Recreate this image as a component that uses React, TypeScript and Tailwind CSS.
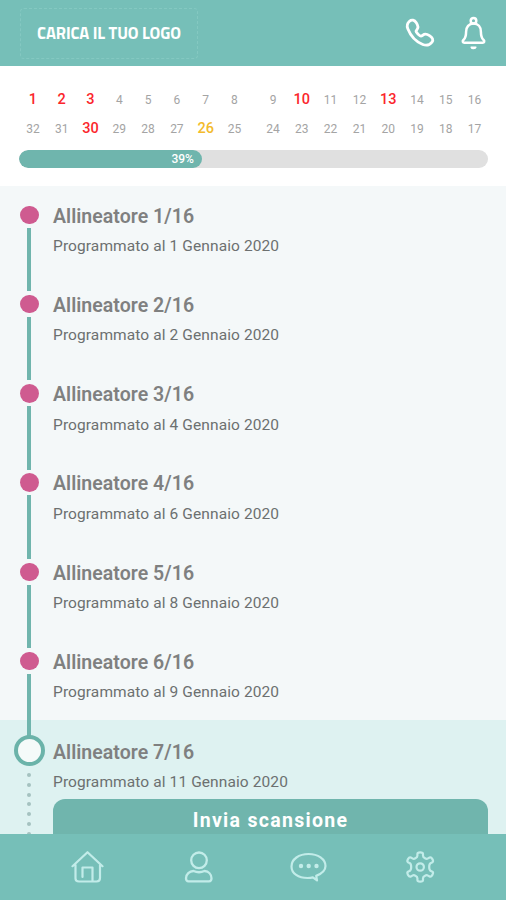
import React from "react";

type Day = { value: number; tone?: "missed" | "today" };

const firstRow: Day[] = [
  { value: 1, tone: "missed" }, { value: 2, tone: "missed" }, { value: 3, tone: "missed" }, { value: 4 },
  { value: 5 }, { value: 6 }, { value: 7 }, { value: 8 }, { value: 9 }, { value: 10, tone: "missed" },
  { value: 11 }, { value: 12 }, { value: 13, tone: "missed" }, { value: 14 }, { value: 15 }, { value: 16 },
];

const secondRow: Day[] = [
  { value: 32 }, { value: 31 }, { value: 30, tone: "missed" }, { value: 29 }, { value: 28 }, { value: 27 },
  { value: 26, tone: "today" }, { value: 25 }, { value: 24 }, { value: 23 }, { value: 22 }, { value: 21 },
  { value: 20 }, { value: 19 }, { value: 18 }, { value: 17 },
];

const aligners = [
  { n: 1, day: 1 }, { n: 2, day: 2 }, { n: 3, day: 4 }, { n: 4, day: 6 }, { n: 5, day: 8 }, { n: 6, day: 9 },
];

function DayCell({ day }: { day: Day }) {
  const tone =
    day.tone === "missed"
      ? "text-[14.5px] font-medium text-[#fb262c]"
      : day.tone === "today"
        ? "text-[14.5px] font-medium text-[#f3bb2c]"
        : "text-[12px] text-[#a4a4a4]";
  return <span className={`w-[28.8px] text-center leading-[20px] ${tone}`}>{day.value}</span>;
}

function DayRow({ days }: { days: Day[] }) {
  return (
    <div className="flex h-[29px] items-center justify-between pr-[17px] pl-[18.5px]">
      <div className="flex">{days.slice(0, 8).map((d) => <DayCell key={d.value} day={d} />)}</div>
      <div className="flex">{days.slice(8).map((d) => <DayCell key={d.value} day={d} />)}</div>
    </div>
  );
}

function AlignerText({ n, day }: { n: number; day: number }) {
  return (
    <div className="whitespace-nowrap">
      <h2 className="text-[19.5px] leading-[21px] font-semibold tracking-[0.04px] text-[#7f8080]">Allineatore {n}/16</h2>
      <p className="mt-[10.5px] text-[15.5px] leading-[18px] tracking-[0.1px] text-[#6c7070]">Programmato al {day} Gennaio 2020</p>
    </div>
  );
}

function Header() {
  return (
    <header className="flex h-[66px] shrink-0 items-start bg-[#76bfb8] text-white">
      <div className="mt-[8px] ml-[20px] flex h-[51px] w-[178px] items-center justify-center rounded-[4px] border border-dashed border-[#84c8c1]">
        <span className="font-['Titillium_Web','Open_Sans',sans-serif] text-[16.5px] font-bold tracking-[-0.1px] whitespace-nowrap">CARICA IL TUO LOGO</span>
      </div>
      <svg className="mt-[17px] ml-[205.500px] shrink-0" width="34" height="34" viewBox="0 0 34 34" fill="none" stroke="currentColor" strokeWidth="2.8" strokeLinejoin="round">
        <path d="M5.500 4.200c2.200-2 5-1.200 6.800 1.600 1.700 2.600 2.500 4.600.8 6.600-.9 1-1.500 1.600-.8 2.700 1 1.600 2.200 2.900 3.800 3.800 1.200.7 1.800 0 2.800-.8 2-1.600 4-1.100 6.600.6 3 1.900 4.200 4.300 2.500 6.400-2.300 2.900-5.600 3.800-9.200 2.400C11.600 24.700 6.500 18.600 3.800 11.800 2.700 9 3.200 6.200 5.500 4.200Z" />
      </svg>
      <svg className="mt-[16px] ml-[22px] shrink-0" width="30" height="36" viewBox="0 0 30 36" fill="none" stroke="currentColor" strokeWidth="2.5" strokeLinejoin="round">
        <circle cx="13.500" cy="4.700" r="2.800" />
        <path d="M13.500 7.500c-4.600 0-7.400 3.500-7.400 8.200 0 4.600-.5 6.300-2.700 8.300-1.200 1.200-.7 2.700 1 2.700h18.200c1.700 0 2.200-1.500 1-2.700-2.200-2-2.700-3.700-2.700-8.300 0-4.700-2.800-8.200-7.400-8.200Z" />
        <path d="M11.200 31.200h4.700c-.4 1.800-4.200 1.900-4.700 0Z" fill="currentColor" strokeWidth="1.500" />
      </svg>
    </header>
  );
}

function Footer() {
  return (
    <nav className="grid h-[66px] shrink-0 grid-cols-4 justify-items-center bg-[#76bfb8] px-[32px] pt-[16px] text-[#c2ece9]">
      <svg width="34" height="34" viewBox="0 0 34 34" fill="none" stroke="currentColor" strokeWidth="2.200" strokeLinecap="round" strokeLinejoin="round">
        <path d="M2.500 16.200 17.500 2.200l15 14M5.500 15v13.500Q5.500 31.500 9 31.500h17.500q3.500 0 3.500-3.500V15M12.500 27V17.500h10V31" />
      </svg>
      <svg width="34" height="34" viewBox="0 0 34 34" fill="none" stroke="currentColor" strokeWidth="2.300" strokeLinejoin="round">
        <circle cx="18" cy="10.300" r="7.800" />
        <path d="M12.500 21c3.500 1.600 7.500 1.600 11 0 4 .3 7 3.100 7 7.300 0 2-.8 3-2.500 3H7.500c-1.700 0-2.500-1-2.500-3 0-4.200 3.500-7 7.500-7.300Z" />
      </svg>
      <svg width="38" height="34" viewBox="0 0 38 34" fill="none" stroke="currentColor" strokeWidth="2.200" strokeLinejoin="round">
        <path d="M19.500 4C10 4 2.500 9.200 2.500 16.400S9.500 28 18.500 28c2.200 0 4-.2 5.400-.6l4.100 2.900-.8-4.400c5.700-2.200 9.300-5.300 9.300-9.800C36.500 8.900 29 4 19.500 4Z" />
        <g fill="currentColor" stroke="none"><circle cx="12" cy="16" r="2.200" /><circle cx="19.700" cy="16" r="2.200" /><circle cx="27.500" cy="16" r="2.200" /></g>
      </svg>
      <svg width="34" height="34" viewBox="0 0 34 34" fill="none" stroke="currentColor" strokeWidth="2.200" strokeLinejoin="round">
        <g transform="translate(1.200 -.5)">
          <circle cx="17" cy="17.500" r="3.700" />
          <path d="M14.200 4.500Q14.200 2.800 17 2.800t2.800 1.700v1.800q0 1.500 2 2.500 1.600.9 3 .1l1.600-.9q1.500-.7 2.800 1.600t0 3.100l-1.600.9Q26 14.400 26 17.500t1.600 3.900l1.600.9q1.300.8 0 3.100T26.400 27l-1.600-.9q-1.400-.8-3 .1-2 1-2 2.500v1.800q0 1.700-2.800 1.700t-2.800-1.700v-1.800q0-1.500-2-2.500-1.600-.9-3-.1L7.600 27q-1.500.7-2.800-1.600t0-3.100l1.600-.9Q8 20.600 8 17.500t-1.600-3.900l-1.600-.9Q3.500 11.900 4.800 9.600T7.600 8l1.600.9q1.400.8 3-.1 2-1 2-2.500Z" />
        </g>
      </svg>
    </nav>
  );
}

export default function App() {
  return (
    <div className="flex h-[900px] w-[506px] flex-col overflow-hidden bg-white font-['Roboto',sans-serif]">
      <Header />
      <section className="h-[120px] shrink-0 pt-[19px]">
        <DayRow days={firstRow} />
        <DayRow days={secondRow} />
        <div className="mt-[7px] mr-[18px] ml-[19px] h-[17.500px] overflow-hidden rounded-full bg-[#e0e0e0]">
          <div className="flex h-full w-[39%] items-center justify-end rounded-full bg-[#6fb5ad] pr-[8px] text-[12px] font-medium text-white">39%</div>
        </div>
      </section>
      <main className="flex min-h-0 flex-1 flex-col">
        <div className="h-[534px] shrink-0 overflow-hidden bg-[#f4f8f9] pt-[19.500px]">
          {aligners.map((a) => (
            <div key={a.n} className="flex h-[89.300px] pl-[20px]">
              <div className="flex w-[33px] flex-col">
                <i className="h-[18.500px] w-[18.500px] shrink-0 rounded-full bg-[#cf5b90]" />
                <i className="mt-[3.500px] ml-[7.300px] h-[63.500px] w-[3.700px] shrink-0 bg-[#70b5ad]" />
              </div>
              <AlignerText n={a.n} day={a.day} />
            </div>
          ))}
        </div>
        <div className="flex min-h-0 flex-1 overflow-hidden bg-[#def2f1]">
          <div className="ml-[14px] flex w-[39px] shrink-0 flex-col">
            <i className="ml-[13.300px] h-[17px] w-[3.700px] shrink-0 bg-[#70b5ad]" />
            <i className="mt-[-2px] h-[31px] w-[31px] shrink-0 rounded-full border-[4.500px] border-[#6bb3a9] bg-[#f5faf9]" />
            <div className="mt-[7px] ml-[13px] flex flex-col gap-[5.800px]">
              {[0, 1, 2, 3, 4, 5, 6].map((i) => <i key={i} className="h-[4px] w-[4px] shrink-0 rounded-full bg-[#a5c2c0]" />)}
            </div>
          </div>
          <div className="flex w-[435px] flex-col pt-[21.500px]">
            <AlignerText n={7} day={11} />
            <button className="mt-[8px] h-[60px] shrink-0 rounded-t-[12px] bg-[#70b5ad] pb-[17px] text-[19.500px] font-bold tracking-[1.300px] text-white">Invia scansione</button>
          </div>
        </div>
      </main>
      <Footer />
    </div>
  );
}
